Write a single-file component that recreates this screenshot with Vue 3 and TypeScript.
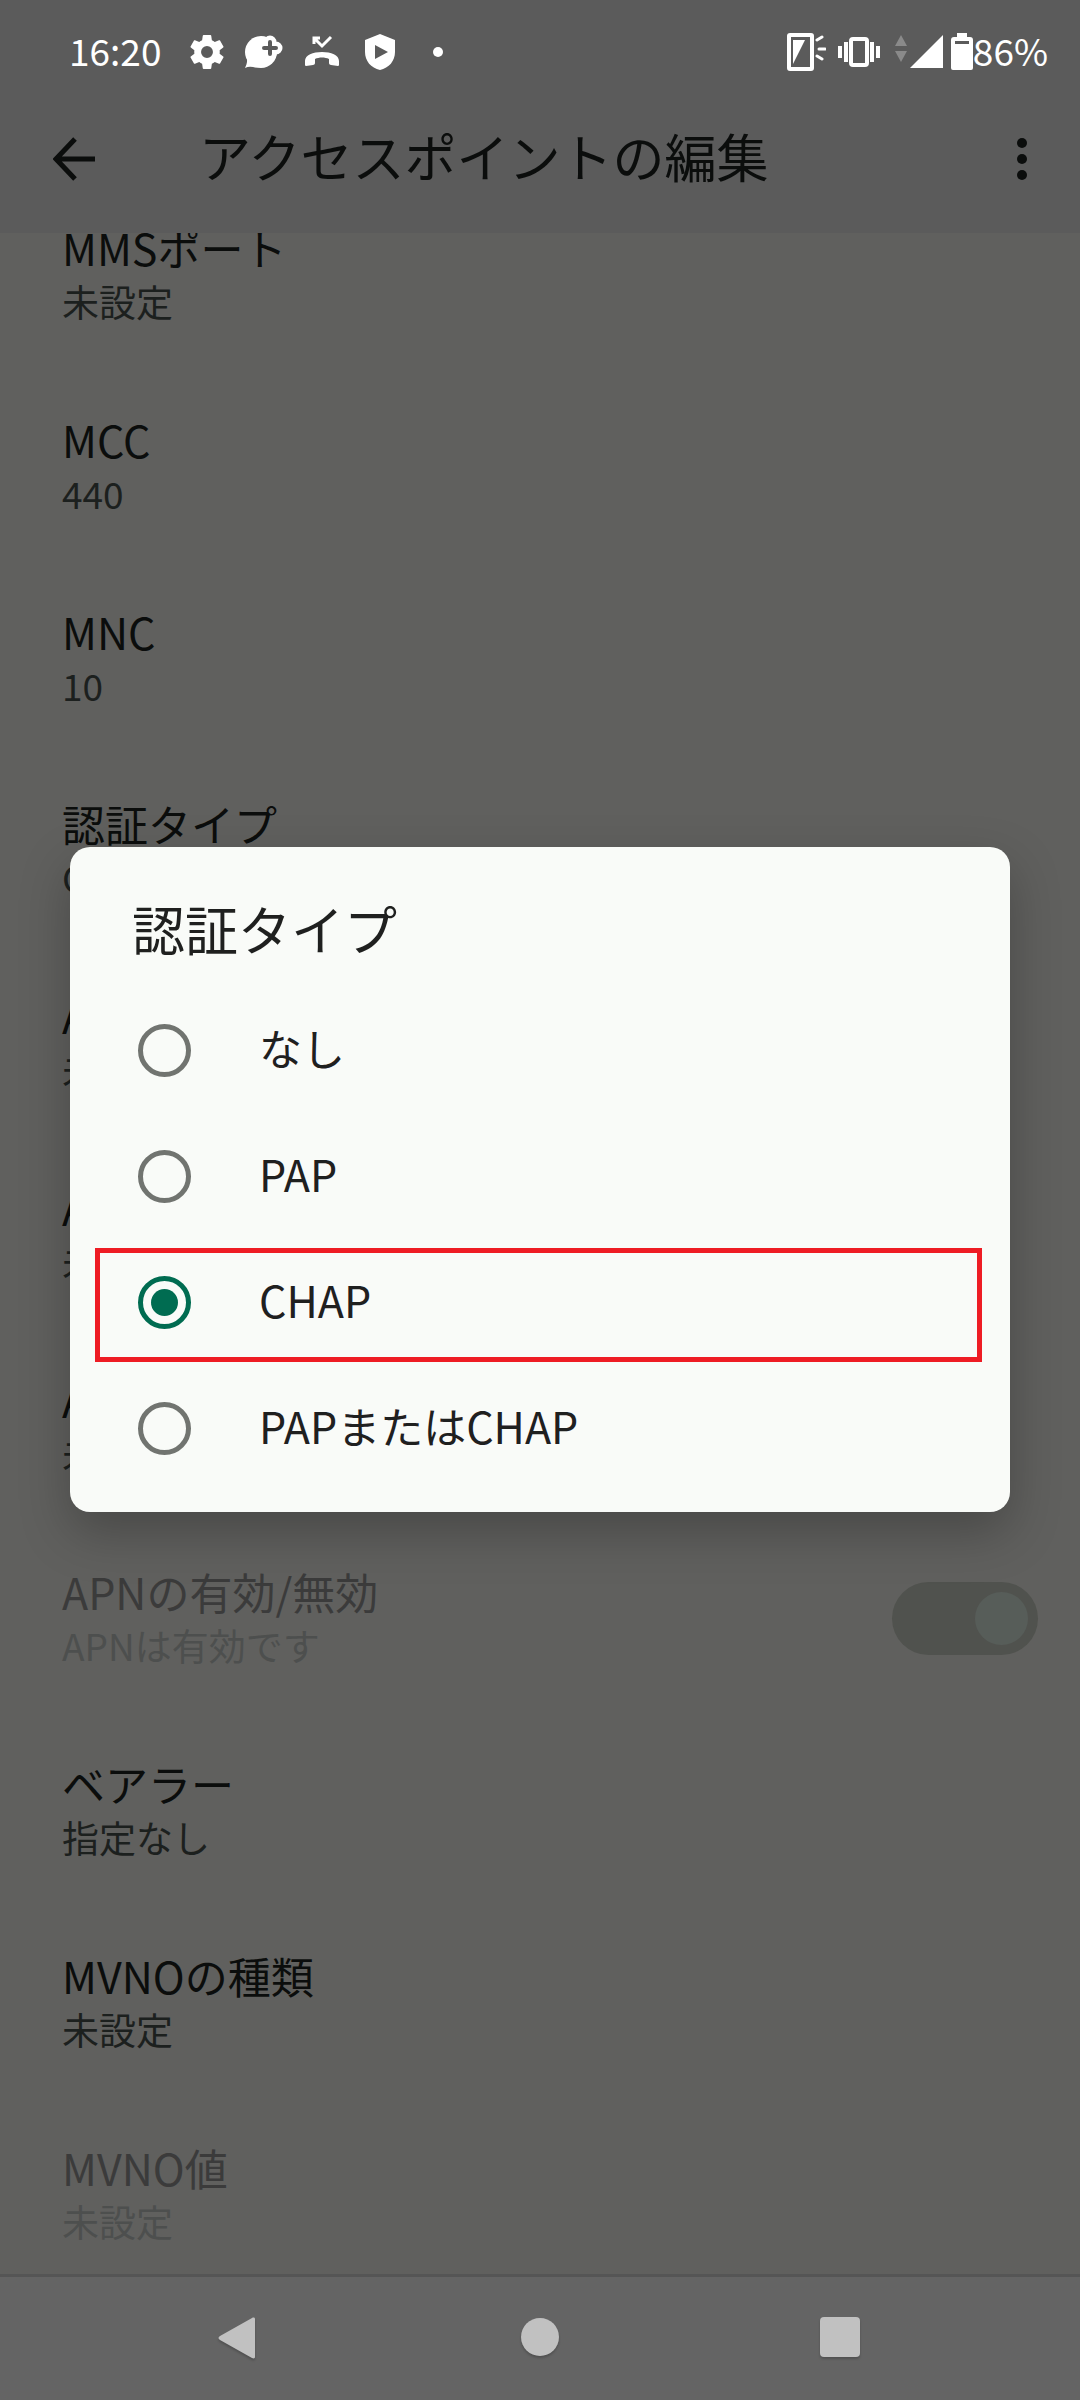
<script setup lang="ts">
import { ref } from 'vue'

interface Setting {
  title: string
  summary: string
  disabled?: boolean
  toggle?: boolean
}

const settings: Setting[] = [
  { title: 'MMSポート', summary: '未設定' },
  { title: 'MCC', summary: '440' },
  { title: 'MNC', summary: '10' },
  { title: '認証タイプ', summary: 'CHAP' },
  { title: 'APNタイプ', summary: '未設定' },
  { title: 'APNプロトコル', summary: '未設定' },
  { title: 'APNローミングプロトコル', summary: '未設定' },
  { title: 'APNの有効/無効', summary: 'APNは有効です', disabled: true, toggle: true },
  { title: 'ベアラー', summary: '指定なし' },
  { title: 'MVNOの種類', summary: '未設定' },
  { title: 'MVNO値', summary: '未設定', disabled: true },
]

const authTypes: string[] = ['なし', 'PAP', 'CHAP', 'PAPまたはCHAP']
const selected = ref<string>('CHAP')
</script>

<template>
  <div class="screen">
    <div class="status">
      <span class="clock">16:20</span>
      <div class="notices">
        <svg width="34" height="34" viewBox="2 2 20 20" fill="#fff">
          <path d="M19.43 12.98c.04-.32.07-.64.07-.98s-.03-.66-.07-.98l2.11-1.65c.19-.15.24-.42.12-.64l-2-3.46c-.12-.22-.39-.3-.61-.22l-2.49 1c-.52-.4-1.08-.73-1.69-.98l-.38-2.65A.49.49 0 0 0 14 2h-4c-.25 0-.46.18-.49.42l-.38 2.65c-.61.25-1.17.59-1.69.98l-2.49-1c-.23-.09-.49 0-.61.22l-2 3.46c-.13.22-.07.49.12.64l2.11 1.65c-.04.32-.07.65-.07.98s.03.66.07.98l-2.11 1.65c-.19.15-.24.42-.12.64l2 3.46c.12.22.39.3.61.22l2.49-1c.52.4 1.08.73 1.69.98l.38 2.65c.03.24.24.42.49.42h4c.25 0 .46-.18.49-.42l.38-2.65c.61-.25 1.17-.59 1.69-.98l2.49 1c.23.09.49 0 .61-.22l2-3.46c.12-.22.07-.49-.12-.64zM12 15.5a3.5 3.5 0 1 1 0-7 3.5 3.5 0 0 1 0 7z" />
        </svg>
        <svg width="40" height="36" viewBox="0 0 40 36">
          <circle cx="17" cy="18" r="16" fill="#fff" />
          <path fill="#fff" d="M2 22c2 4 1 8-1 12 4-2 8-1 12 0z" />
          <path d="M26 8v12M20 14h12" stroke="#fff" stroke-width="13" stroke-linecap="round" />
          <path d="M26 8v12M20 14h12" stroke="#5b5b5b" stroke-width="4" stroke-linecap="round" />
        </svg>
        <svg width="36" height="36" viewBox="0 0 36 36">
          <path d="M10 10V4h6M10 4l8 8 9-9" fill="none" stroke="#fff" stroke-width="3" />
          <path fill="#fff" d="M1 27c0-6 8-9 17-9s17 3 17 9v3c0 1 0 2-1 2l-7-1c-1 0-2-1-2-2v-4c-4-2-10-2-14 0v4c0 1-1 2-2 2l-7 1c-1 0-1-1-1-2z" />
        </svg>
        <svg class="shield" width="32" height="38" viewBox="0 0 32 38">
          <path fill="#fff" fill-rule="evenodd" d="M16 1l15 6v12c0 9-6 16-15 18C7 35 1 28 1 19V7zM11 12v14l13-7z" />
        </svg>
        <svg class="more-dot" width="10" height="10" viewBox="0 0 10 10"><circle cx="5" cy="5" r="5" fill="#fff" /></svg>
      </div>
      <div class="system">
        <svg width="40" height="40" viewBox="0 0 40 40">
          <rect x="3" y="3" width="23" height="34" rx="1" fill="none" stroke="#fff" stroke-width="4" />
          <path fill="#fff" d="M7 8h12L7 32z" />
          <path d="M31 8l5-3M33 17h6M31 24l5 3" stroke="#fff" stroke-width="3" stroke-linecap="round" />
        </svg>
        <svg class="vibrate" width="42" height="32" viewBox="0 0 42 32">
          <rect x="13" y="3" width="16" height="26" rx="2" fill="none" stroke="#fff" stroke-width="4" />
          <path d="M2 10v12M8 6v20M34 6v20M40 10v12" stroke="#fff" stroke-width="4" />
        </svg>
        <svg class="traffic" width="12" height="36" viewBox="0 0 12 36" fill="#8a8a8a">
          <path d="M6 1l6 11H0zM0 17h12L6 28z" />
        </svg>
        <svg class="signal" width="34" height="36" viewBox="0 0 34 36"><path fill="#fff" d="M33 1v33H0z" /></svg>
        <svg width="22" height="38" viewBox="0 0 22 38">
          <path fill="#fff" fill-rule="evenodd" d="M6 0h10v4h3a3 3 0 0 1 3 3v28a2 2 0 0 1-2 2H2a2 2 0 0 1-2-2V7a3 3 0 0 1 3-3h3zM4 8v3h14V8z" />
        </svg>
        <span class="percent">86%</span>
      </div>
    </div>

    <header class="appbar">
      <button class="icon-btn back" aria-label="戻る">
        <svg width="42" height="44" viewBox="0 0 42 44" fill="none" stroke="#0b0d0c" stroke-width="5">
          <path d="M22 2L3 22l19 20M3 22h39" />
        </svg>
      </button>
      <h1>アクセスポイントの編集</h1>
      <button class="icon-btn menu" aria-label="その他">
        <svg width="12" height="44" viewBox="0 0 12 44" fill="#0b0d0c">
          <circle cx="6" cy="6" r="5" /><circle cx="6" cy="22" r="5" /><circle cx="6" cy="38" r="5" />
        </svg>
      </button>
    </header>

    <main class="viewport">
      <ul class="settings">
        <li v-for="item in settings" :key="item.title">
          <label v-if="item.toggle" class="row disabled">
            <span class="texts">
              <span class="title">{{ item.title }}</span>
              <span class="summary">{{ item.summary }}</span>
            </span>
            <input class="switch" type="checkbox" role="switch" checked disabled />
          </label>
          <button v-else class="row" :class="{ disabled: item.disabled }" :disabled="item.disabled">
            <span class="texts">
              <span class="title">{{ item.title }}</span>
              <span class="summary">{{ item.summary }}</span>
            </span>
          </button>
        </li>
      </ul>
    </main>

    <nav class="navbar">
      <button class="icon-btn" aria-label="戻る">
        <svg class="nav-icon" width="44" height="44" viewBox="0 0 44 44">
          <path d="M2 19L34 1c2-1 3 0 3 1v38c0 1-1 2-3 1L2 23c-2-1-2-3 0-4z" fill="#c1c1c1" />
        </svg>
      </button>
      <button class="icon-btn" aria-label="ホーム">
        <svg class="nav-icon" width="44" height="44" viewBox="0 0 44 44"><circle cx="22" cy="20" r="19" fill="#c1c1c1" /></svg>
      </button>
      <button class="icon-btn" aria-label="履歴">
        <svg class="nav-icon" width="44" height="44" viewBox="0 0 44 44"><rect x="2" y="0" width="40" height="40" rx="4" fill="#c1c1c1" /></svg>
      </button>
    </nav>

    <div class="overlay">
      <section class="dialog" role="dialog" aria-labelledby="dialog-title">
        <h2 id="dialog-title">認証タイプ</h2>
        <label v-for="type in authTypes" :key="type" class="option" :class="{ marked: type === selected }">
          <input v-model="selected" type="radio" name="auth" :value="type" />
          <span class="option-text">{{ type }}</span>
        </label>
      </section>
    </div>
  </div>
</template>

<style>
body {
  margin: 0;
  background: #60605e;
}
</style>

<style scoped>
.screen {
  position: relative;
  display: flex;
  flex-direction: column;
  height: 100vh;
  overflow: hidden;
  background: #60605e;
  color: #0b0d0c;
  font-family: "Noto Sans CJK JP", "Noto Sans", sans-serif;
}

svg {
  display: block;
  flex: none;
}

button {
  border: 0;
  padding: 0;
  background: none;
  color: inherit;
  font: inherit;
  text-align: left;
}

.status {
  display: flex;
  align-items: center;
  box-sizing: border-box;
  height: 85px;
  padding: 19px 32px 0 69px;
  background: #5b5b5b;
  color: #fff;
  font-size: 37px;
  line-height: 48px;
}

.clock,
.percent {
  padding-bottom: 4px;
}

.clock {
  width: 121px;
}

.notices {
  display: flex;
  align-items: center;
  gap: 20px;
}

.shield {
  margin-left: 4px;
}

.more-dot {
  margin-left: 17px;
}

.system {
  display: flex;
  align-items: center;
  margin-left: auto;
}

.vibrate {
  margin-left: 12px;
}

.traffic {
  margin-left: 15px;
}

.signal {
  margin: 0 7px 0 3px;
}

.appbar {
  display: flex;
  align-items: center;
  height: 148px;
  padding: 0 52px 0 53px;
  background: #5b5b5b;
}

.appbar h1 {
  flex: 1;
  margin: 0 0 6px 104px;
  font-size: 52px;
  font-weight: 400;
  line-height: 76px;
}

.viewport {
  flex: 1;
  min-height: 0;
  overflow: hidden;
}

.settings {
  margin: -58px 0 0;
  padding: 0;
  list-style: none;
}

.row {
  display: flex;
  align-items: center;
  justify-content: space-between;
  box-sizing: border-box;
  width: 100%;
  padding: 42px 42px 42px 62px;
}

.texts,
.title,
.summary {
  display: block;
}

.title {
  font-size: 43px;
  line-height: 60px;
}

.summary {
  color: #1c201e;
  font-size: 37px;
  line-height: 48px;
}

.disabled .title {
  color: #3b3b3b;
}

.disabled .summary {
  color: #4d4f4e;
}

.switch {
  appearance: none;
  display: flex;
  align-items: center;
  justify-content: flex-end;
  box-sizing: border-box;
  width: 146px;
  height: 73px;
  margin: 6px 0 0;
  padding: 10px;
  border-radius: 37px;
  background: #50524e;
}

.switch::before {
  content: "";
  width: 53px;
  height: 53px;
  border-radius: 50%;
  background: #575d59;
}

.navbar {
  display: grid;
  grid-template-columns: repeat(3, 1fr);
  align-items: center;
  box-sizing: border-box;
  height: 126px;
  padding: 0 calc(100% / 12);
  border-top: 3px solid #555;
  background: #646464;
}

.navbar .icon-btn {
  justify-self: center;
}

.nav-icon {
  filter: drop-shadow(0 2px 1px rgba(0, 0, 0, 0.2));
}

.overlay {
  position: absolute;
  inset: 85px 0 126px;
  display: flex;
  align-items: center;
  padding: 0 70px;
}

.dialog {
  flex: 1;
  padding: 43px 0 21px;
  border-radius: 20px;
  background: #f9fbf8;
  box-shadow: 0 20px 50px rgba(0, 0, 0, 0.25);
  color: #1f201f;
}

.dialog h2 {
  margin: 0 62px 21px;
  font-size: 53px;
  font-weight: 400;
  line-height: 76px;
}

.option {
  position: relative;
  display: flex;
  align-items: center;
  gap: 68px;
  height: 126px;
  padding: 0 68px;
  font-size: 43px;
  line-height: 60px;
}

.option-text {
  padding-bottom: 6px;
}

.option input {
  appearance: none;
  display: grid;
  place-items: center;
  box-sizing: border-box;
  width: 53px;
  height: 53px;
  margin: 0;
  border: 5px solid #717470;
  border-radius: 50%;
}

.option input:checked {
  border-color: #006c51;
}

.option input:checked::before {
  content: "";
  width: 27px;
  height: 27px;
  border-radius: 50%;
  background: #006c51;
}

.marked::after {
  content: "";
  position: absolute;
  inset: 9px 28px 3px 25px;
  border: 5px solid #ee1c24;
}
</style>
